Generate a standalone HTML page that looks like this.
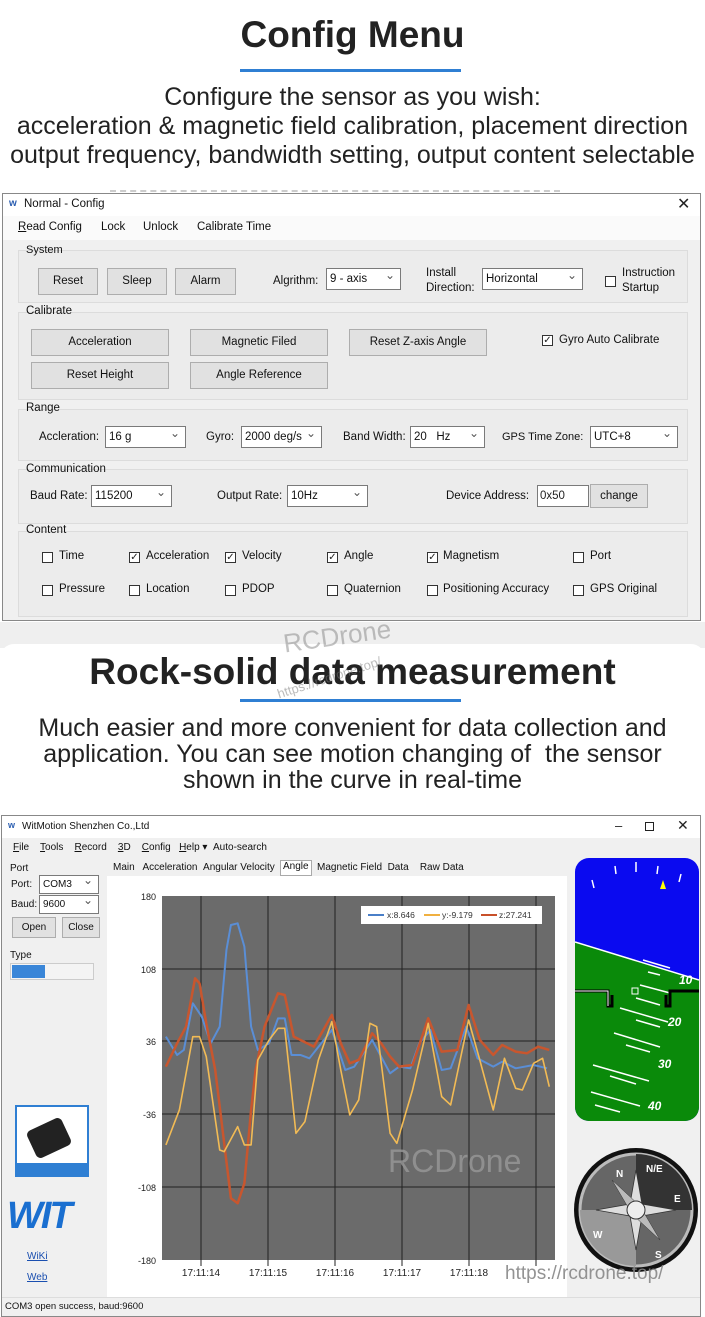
<!DOCTYPE html>
<html><head><meta charset="utf-8"><style>
*{margin:0;padding:0;box-sizing:border-box}
body{width:705px;height:1317px;position:relative;background:#fff;font-family:"Liberation Sans",sans-serif;overflow:hidden;color:#222}
.a{position:absolute;white-space:nowrap}
.h{font-weight:bold;font-size:37px;color:#222;left:0;width:705px;text-align:center}
.p{font-size:25px;color:#222;left:0;width:705px;text-align:center}
.ui{font-size:11.5px;color:#111}
.btn{position:absolute;background:#e1e1e1;border:1px solid #adadad;font-size:11.5px;text-align:center;color:#111}
.sel{position:absolute;background:#fff;border:1px solid #7a7a7a;font-size:11.5px;padding-left:3px;color:#111}
.sel:after{content:"⌄";position:absolute;right:5px;top:-4px;font-size:12px;color:#555}
.grp{position:absolute;border:1px solid #dcdcdc;background:#ececec}
.cb{position:absolute;width:11px;height:11px;border:1px solid #333;background:#fff;font-size:10px;line-height:9px;text-align:center}
</style></head><body>

<div class="a h" style="top:14px">Config Menu</div>
<div class="a" style="left:240px;top:69px;width:221px;height:3px;background:#2f7fd3"></div>
<div class="a p" style="top:83px">Configure the sensor as you wish:</div>
<div class="a p" style="top:112px">acceleration &amp; magnetic field calibration, placement direction</div>
<div class="a p" style="top:141px">output frequency, bandwidth setting, output content selectable</div>
<div class="a" style="left:110px;top:190px;width:450px;border-top:2px dashed #ccc"></div>

<!-- config window -->
<div class="a" style="left:2px;top:193px;width:699px;height:428px;border:1px solid #888;background:#f0f0f0">
 <div class="a" style="left:0;top:0;width:697px;height:22px;background:#fff"></div>
 <div class="a ui" style="left:6px;top:4px;color:#2a5db0;font-size:10px;font-weight:bold">w</div>
 <div class="a ui" style="left:21px;top:4px">Normal - Config</div>
 <div class="a" style="left:674px;top:0px;font-size:16px">✕</div>
 <div class="a" style="left:0;top:22px;width:697px;height:24px;background:#fafafa"></div>
 <div class="a ui" style="left:15px;top:27px"><u>R</u>ead Config</div>
 <div class="a ui" style="left:98px;top:27px">Lock</div>
 <div class="a ui" style="left:140px;top:27px">Unlock</div>
 <div class="a ui" style="left:194px;top:27px">Calibrate Time</div>
</div>
<div class="grp" style="left:18px;top:250px;width:670px;height:53px"></div>
<div class="a ui" style="left:26px;top:244px;font-size:11px">System</div>
<div class="btn" style="left:38px;top:268px;width:60px;height:27px;line-height:25px">Reset</div>
<div class="btn" style="left:107px;top:268px;width:60px;height:27px;line-height:25px">Sleep</div>
<div class="btn" style="left:175px;top:268px;width:61px;height:27px;line-height:25px">Alarm</div>
<div class="a ui" style="left:273px;top:275px">Algrithm:</div>
<div class="sel" style="left:326px;top:268px;width:75px;height:22px;line-height:20px">9 - axis</div>
<div class="a ui" style="left:426px;top:266px;line-height:15px">Install<br>Direction:</div>
<div class="sel" style="left:482px;top:268px;width:101px;height:22px;line-height:20px">Horizontal</div>
<div class="cb" style="left:605px;top:276px"></div>
<div class="a ui" style="left:622px;top:266px;line-height:15px">Instruction<br>Startup</div>

<div class="grp" style="left:18px;top:312px;width:670px;height:88px"></div>
<div class="a ui" style="left:26px;top:305px">Calibrate</div>
<div class="btn" style="left:31px;top:329px;width:138px;height:27px;line-height:25px">Acceleration</div>
<div class="btn" style="left:190px;top:329px;width:138px;height:27px;line-height:25px">Magnetic Filed</div>
<div class="btn" style="left:349px;top:329px;width:138px;height:27px;line-height:25px">Reset Z-axis Angle</div>
<div class="cb" style="left:542px;top:335px">✓</div>
<div class="a ui" style="left:559px;top:334px">Gyro Auto Calibrate</div>
<div class="btn" style="left:31px;top:362px;width:138px;height:27px;line-height:25px">Reset Height</div>
<div class="btn" style="left:190px;top:362px;width:138px;height:27px;line-height:25px">Angle Reference</div>

<div class="grp" style="left:18px;top:409px;width:670px;height:52px"></div>
<div class="a ui" style="left:26px;top:402px">Range</div>
<div class="a ui" style="left:39px;top:431px">Accleration:</div>
<div class="sel" style="left:105px;top:426px;width:81px;height:22px;line-height:20px">16 g</div>
<div class="a ui" style="left:206px;top:431px">Gyro:</div>
<div class="sel" style="left:241px;top:426px;width:81px;height:22px;line-height:20px">2000 deg/s</div>
<div class="a ui" style="left:343px;top:431px">Band Width:</div>
<div class="sel" style="left:410px;top:426px;width:75px;height:22px;line-height:20px">20 &nbsp; Hz</div>
<div class="a ui" style="left:502px;top:431px;font-size:11px">GPS Time Zone:</div>
<div class="sel" style="left:590px;top:426px;width:88px;height:22px;line-height:20px">UTC+8</div>

<div class="grp" style="left:18px;top:469px;width:670px;height:55px"></div>
<div class="a ui" style="left:26px;top:463px">Communication</div>
<div class="a ui" style="left:30px;top:490px">Baud Rate:</div>
<div class="sel" style="left:91px;top:485px;width:81px;height:22px;line-height:20px">115200</div>
<div class="a ui" style="left:217px;top:490px">Output Rate:</div>
<div class="sel" style="left:287px;top:485px;width:81px;height:22px;line-height:20px">10Hz</div>
<div class="a ui" style="left:446px;top:490px">Device Address:</div>
<div class="a" style="left:537px;top:485px;width:52px;height:22px;line-height:20px;padding-left:2px;background:#fff;border:1px solid #7a7a7a;font-size:11.5px">0x50</div>
<div class="btn" style="left:590px;top:484px;width:58px;height:24px;line-height:22px">change</div>

<div class="grp" style="left:18px;top:531px;width:670px;height:86px"></div>
<div class="a ui" style="left:26px;top:524px">Content</div>
<div class="cb" style="left:42px;top:552px"></div><div class="a ui" style="left:59px;top:550px">Time</div>
<div class="cb" style="left:129px;top:552px">✓</div><div class="a ui" style="left:146px;top:550px">Acceleration</div>
<div class="cb" style="left:225px;top:552px">✓</div><div class="a ui" style="left:242px;top:550px">Velocity</div>
<div class="cb" style="left:327px;top:552px">✓</div><div class="a ui" style="left:344px;top:550px">Angle</div>
<div class="cb" style="left:427px;top:552px">✓</div><div class="a ui" style="left:443px;top:550px">Magnetism</div>
<div class="cb" style="left:573px;top:552px"></div><div class="a ui" style="left:590px;top:550px">Port</div>
<div class="cb" style="left:42px;top:585px"></div><div class="a ui" style="left:59px;top:583px">Pressure</div>
<div class="cb" style="left:129px;top:585px"></div><div class="a ui" style="left:146px;top:583px">Location</div>
<div class="cb" style="left:225px;top:585px"></div><div class="a ui" style="left:242px;top:583px">PDOP</div>
<div class="cb" style="left:327px;top:585px"></div><div class="a ui" style="left:344px;top:583px">Quaternion</div>
<div class="cb" style="left:427px;top:585px"></div><div class="a ui" style="left:443px;top:583px">Positioning Accuracy</div>
<div class="cb" style="left:573px;top:585px"></div><div class="a ui" style="left:590px;top:583px">GPS Original</div>

<div class="a" style="left:0;top:622px;width:705px;height:26px;background:#efefef"></div>
<div class="a" style="left:0;top:644px;width:705px;height:30px;background:#fff;border-radius:14px 14px 0 0"></div>

<div class="a h" style="top:651px">Rock-solid data measurement</div>
<div class="a" style="left:240px;top:699px;width:221px;height:3px;background:#2f7fd3"></div>
<div class="a" style="left:283px;top:621px;font-size:26px;color:rgba(120,120,120,.45);transform:rotate(-8deg)">RCDrone</div>
<div class="a" style="left:275px;top:670px;font-size:13px;color:rgba(120,120,120,.5);transform:rotate(-18deg)">https://rcdrone.top/</div>
<div class="a p" style="top:714px">Much easier and more convenient for data collection and</div>
<div class="a p" style="top:740px">application. You can see motion changing of &nbsp;the sensor</div>
<div class="a p" style="top:766px">shown in the curve in real-time</div>

<!-- app window -->
<div class="a" style="left:1px;top:815px;width:700px;height:502px;border:1px solid #888;background:#f0f0f0"></div>
<div class="a" style="left:2px;top:816px;width:698px;height:22px;background:#fff"></div>
<div class="a ui" style="left:8px;top:820px;font-size:9px;color:#2a5db0;font-weight:bold">w</div>
<div class="a ui" style="left:22px;top:821px;font-size:10px">WitMotion Shenzhen Co.,Ltd</div>
<div class="a" style="left:615px;top:818px;font-size:13px">–</div>
<div class="a" style="left:645px;top:822px;width:9px;height:9px;border:1px solid #222"></div>
<div class="a" style="left:677px;top:817px;font-size:14px">✕</div>
<div class="a ui" style="left:13px;top:842px;font-size:10px"><u>F</u>ile &nbsp;&nbsp; <u>T</u>ools &nbsp;&nbsp; <u>R</u>ecord &nbsp;&nbsp; <u>3</u>D &nbsp;&nbsp; <u>C</u>onfig &nbsp; <u>H</u>elp ▾ &nbsp;Auto-search</div>

<div class="a ui" style="left:10px;top:863px;font-size:10px">Port</div>
<div class="a ui" style="left:11px;top:879px;font-size:10px">Port:</div>
<div class="sel" style="left:39px;top:875px;width:60px;height:19px;font-size:10px;line-height:17px">COM3</div>
<div class="a ui" style="left:11px;top:899px;font-size:10px">Baud:</div>
<div class="sel" style="left:39px;top:895px;width:60px;height:19px;font-size:10px;line-height:17px">9600</div>
<div class="btn" style="left:12px;top:917px;width:44px;height:21px;line-height:19px;font-size:10px">Open</div>
<div class="btn" style="left:62px;top:917px;width:38px;height:21px;line-height:19px;font-size:10px">Close</div>
<div class="a ui" style="left:10px;top:950px;font-size:10px">Type</div>
<div class="a" style="left:10px;top:963px;width:84px;height:17px;border:1px solid #ccc;background:#f4f4f4"></div>
<div class="a" style="left:12px;top:965px;width:33px;height:13px;background:#3a86d8"></div>
<div class="a" style="left:15px;top:1105px;width:74px;height:72px;background:#fff;border:2px solid #2f7fd3"></div>
<div class="a" style="left:30px;top:1123px;width:38px;height:30px;background:#222;border-radius:5px;transform:rotate(-25deg)"></div>
<div class="a" style="left:15px;top:1163px;width:74px;height:14px;background:#2f7fd3"></div>
<div class="a" style="left:7px;top:1195px;font-size:38px;font-weight:bold;font-style:italic;color:#1a6fd0;letter-spacing:-2px">WIT</div>
<div class="a" style="left:27px;top:1251px;font-size:10px;color:#1a4fb0;text-decoration:underline">WiKi</div>
<div class="a" style="left:27px;top:1272px;font-size:10px;color:#1a4fb0;text-decoration:underline">Web</div>

<div class="a" style="left:107px;top:876px;width:460px;height:421px;background:#fff"></div>
<div class="a ui" style="left:113px;top:862px;font-size:10px">Main &nbsp; Acceleration &nbsp;Angular Velocity</div>
<div class="a" style="left:280px;top:860px;width:32px;height:16px;background:#fff;border:1px solid #aaa"></div>
<div class="a ui" style="left:283px;top:861px;font-size:10px">Angle</div>
<div class="a ui" style="left:317px;top:862px;font-size:10px">Magnetic Field &nbsp;Data &nbsp;&nbsp; Raw Data</div>

<svg class="a" style="left:0;top:0" width="705" height="1317">
 <rect x="162" y="896" width="393" height="364" fill="#6b6b6b"/>
 <g stroke="#222" stroke-width="1">
  <line x1="162" x2="555" y1="969" y2="969"/><line x1="162" x2="555" y1="1041" y2="1041"/>
  <line x1="162" x2="555" y1="1114" y2="1114"/><line x1="162" x2="555" y1="1187" y2="1187"/>
  <line x1="201" x2="201" y1="896" y2="1266"/><line x1="268" x2="268" y1="896" y2="1266"/>
  <line x1="335" x2="335" y1="896" y2="1266"/><line x1="402" x2="402" y1="896" y2="1266"/>
  <line x1="469" x2="469" y1="896" y2="1266"/><line x1="536" x2="536" y1="896" y2="1266"/>
 </g>
 <g font-family="Liberation Sans" font-size="9" fill="#222" text-anchor="end">
  <text x="156" y="900">180</text><text x="156" y="973">108</text><text x="156" y="1045">36</text>
  <text x="156" y="1118">-36</text><text x="156" y="1191">-108</text><text x="156" y="1264">-180</text>
 </g>
 <g font-family="Liberation Sans" font-size="10" fill="#222" text-anchor="middle">
  <text x="201" y="1276">17:11:14</text><text x="268" y="1276">17:11:15</text><text x="335" y="1276">17:11:16</text>
  <text x="402" y="1276">17:11:17</text><text x="469" y="1276">17:11:18</text>
 </g>
 <rect x="361" y="906" width="181" height="18" fill="#fff"/>
 <g font-family="Liberation Sans" font-size="8.5" fill="#333">
  <line x1="368" x2="384" y1="915" y2="915" stroke="#4a7fc8" stroke-width="2"/><text x="387" y="918">x:8.646</text>
  <line x1="424" x2="440" y1="915" y2="915" stroke="#f0b040" stroke-width="2"/><text x="442" y="918">y:-9.179</text>
  <line x1="481" x2="497" y1="915" y2="915" stroke="#c8502a" stroke-width="2"/><text x="499" y="918">z:27.241</text>
 </g>
 <g transform="translate(0,810) scale(0.4484,0.3333)" fill="none" stroke-linejoin="round">
  <polyline vector-effect="non-scaling-stroke" stroke="#5a8ed6" stroke-width="2" points="370,680 395,735 410,720 430,580 450,620 470,700 490,650 505,420 515,345 530,340 545,410 560,650 575,720 600,700 620,625 635,625 650,735 670,735 690,745 740,660 770,780 790,770 830,690 870,790 890,770 915,775 935,700 960,660 985,780 1005,775 1040,650 1065,745 1100,770 1120,755 1150,775 1190,765 1220,775"/>
  <polyline vector-effect="non-scaling-stroke" stroke="#c8562e" stroke-width="2.5" points="370,770 395,700 415,650 435,505 445,520 460,640 480,780 500,1000 515,1165 530,1180 545,1120 560,900 570,780 590,650 620,550 635,555 655,680 700,710 740,615 760,700 780,760 800,750 830,670 850,700 870,740 890,770 920,765 955,625 985,725 1020,720 1045,585 1070,690 1100,735 1120,705 1150,725 1175,730 1200,710 1225,720"/>
  <polyline vector-effect="non-scaling-stroke" stroke="#f2bb55" stroke-width="1.6" points="370,1005 400,900 430,680 445,680 460,740 490,1020 500,1025 530,950 545,1005 560,1005 575,750 600,690 620,655 635,655 660,970 680,935 710,750 740,635 760,780 780,915 800,870 825,640 840,650 870,970 885,1000 920,840 955,640 985,860 1005,885 1045,630 1070,750 1100,900 1125,745 1150,835 1165,840 1190,760 1210,745 1225,830"/>
 </g>
 <text x="388" y="1172" font-family="Liberation Sans" font-size="32" fill="#999" opacity="0.8">RCDrone</text>
 <clipPath id="c"><rect x="575" y="858" width="124" height="263" rx="14"/></clipPath>
 <g clip-path="url(#c)">
  <rect x="575" y="858" width="124" height="263" fill="#0a0af0"/>
  <polygon points="575,942 699,980 699,1121 575,1121" fill="#0a8a0a"/>
  <line x1="575" y1="942" x2="699" y2="980" stroke="#fff" stroke-width="1.5"/>
  <g stroke="#fff" stroke-width="1.5">
   <line x1="640" y1="985" x2="670" y2="993"/><line x1="636" y1="998" x2="660" y2="1005"/>
   <line x1="620" y1="1008" x2="668" y2="1022"/><line x1="636" y1="1020" x2="660" y2="1027"/>
   <line x1="614" y1="1033" x2="660" y2="1047"/><line x1="626" y1="1045" x2="650" y2="1052"/>
   <line x1="593" y1="1065" x2="649" y2="1081"/><line x1="610" y1="1076" x2="636" y2="1084"/>
   <line x1="591" y1="1092" x2="640" y2="1106"/><line x1="595" y1="1105" x2="620" y2="1112"/>
   <line x1="643" y1="960" x2="670" y2="968"/><line x1="648" y1="972" x2="660" y2="975"/>
   <line x1="592" y1="880" x2="594" y2="888"/><line x1="615" y1="866" x2="616" y2="874"/><line x1="636" y1="862" x2="636" y2="872"/><line x1="658" y1="866" x2="657" y2="874"/><line x1="681" y1="874" x2="679" y2="882"/>
  </g>
  <polygon points="660,889 663,880 666,889" fill="#ff0"/>
  <g font-family="Liberation Sans" font-size="12" font-style="italic" font-weight="bold" fill="#fff">
   <text x="679" y="984">10</text><text x="668" y="1026">20</text><text x="658" y="1068">30</text><text x="648" y="1110">40</text>
  </g>
  <path d="M575,991 H608 V1006 H612 V995" fill="none" stroke="#000" stroke-width="3"/>
  <path d="M699,991 H670 V1006 H666 V995" fill="none" stroke="#000" stroke-width="3"/>
  <path d="M575,991 H608 V1006" fill="none" stroke="#fff" stroke-width="1"/>
  <rect x="632" y="988" width="6" height="6" fill="none" stroke="#fff"/>
 </g>
 <circle cx="636" cy="1210" r="62" fill="#111"/>
 <circle cx="636" cy="1210" r="56" fill="#666" stroke="#bbb" stroke-width="3"/>
 <path d="M636,1154 A56,56 0 0 1 692,1210 L636,1210Z" fill="#333"/>
 <path d="M636,1210 L636,1266 A56,56 0 0 1 580,1210Z" fill="#999"/>
 <polygon points="636,1170 642,1204 676,1210 642,1216 636,1250 630,1216 596,1210 630,1204" fill="#ddd" stroke="#333" stroke-width="0.8"/>
 <polygon points="612,1180 640,1206 660,1240 632,1214" fill="#bbb" stroke="#333" stroke-width="0.5"/>
 <circle cx="636" cy="1210" r="9" fill="#eee" stroke="#333"/>
 <g font-family="Liberation Sans" font-size="10" font-weight="bold" fill="#fff">
  <text x="616" y="1177">N</text><text x="646" y="1172">N/E</text><text x="674" y="1202">E</text><text x="655" y="1258">S</text><text x="593" y="1238">W</text>
 </g>
 <text x="505" y="1279" font-family="Liberation Sans" font-size="19" fill="#888" opacity="0.9">https://rcdrone.top/</text>
</svg>

<div class="a" style="left:2px;top:1297px;width:698px;height:18px;background:#f0f0f0;border-top:1px solid #ddd"></div>
<div class="a ui" style="left:5px;top:1301px;font-size:9.5px">COM3 open success, baud:9600</div>
</body></html>
